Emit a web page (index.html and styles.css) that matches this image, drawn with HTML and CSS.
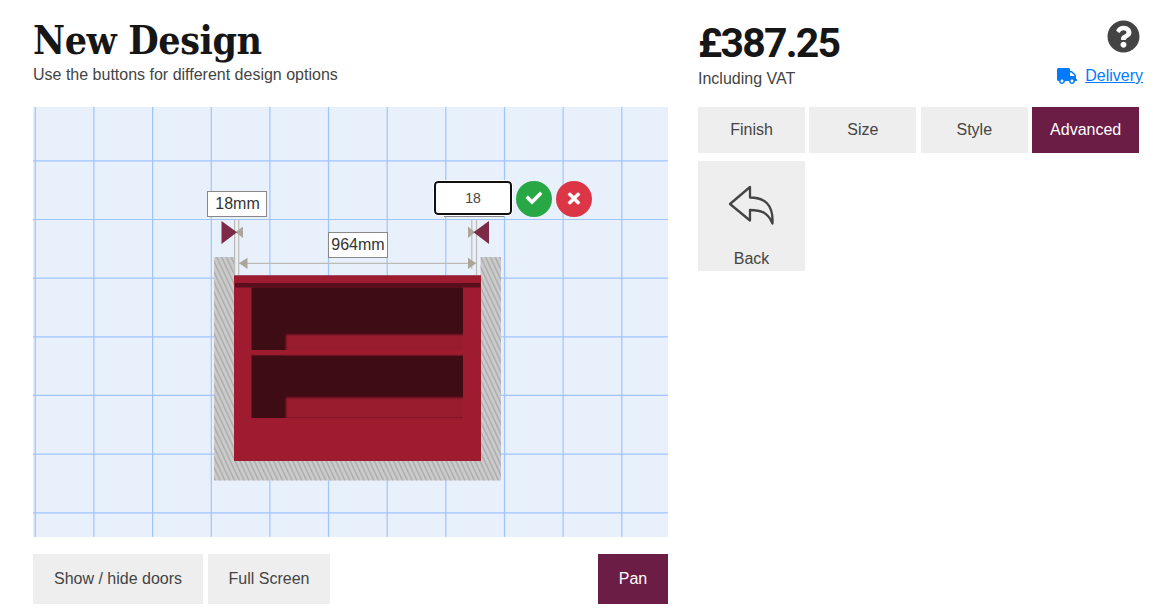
FILE: index.html
```html
<!DOCTYPE html>
<html lang="en">
<head>
    <meta charset="UTF-8">
    <meta name="viewport" content="width=device-width, initial-scale=1.0">
    <title>New Design</title>
    <link rel="stylesheet" href="styles.css">
</head>
<body>
    <div class="page">
        <main class="design">
            <header class="design-header">
                <h1>New Design</h1>
                <p>Use the buttons for different design options</p>
            </header>

            <div class="canvas">
                <svg class="drawing" width="635" height="430" viewBox="33 107 635 430">
                    <defs>
                        <pattern id="hatch" width="4.8" height="8" patternUnits="userSpaceOnUse" patternTransform="skewX(25)">
                            <rect width="4.8" height="8" fill="#cbcbcb"/>
                            <rect width="1.7" height="8" fill="#adadad"/>
                        </pattern>
                        <filter id="soft" x="-10%" y="-30%" width="120%" height="160%"><feGaussianBlur stdDeviation="1.3"/></filter>
                        <clipPath id="inside"><path d="M251.5 287.5H463V350H251.5zM251.5 355H463V418H251.5z"/></clipPath>
                    </defs>
                    <rect x="33" y="107" width="635" height="430" fill="#e8f0fc"/>

                    <!-- grid -->
                    <path d="M35.3 107V537M93.9 107V537M152.6 107V537M211.3 107V537M269.9 107V537M328.5 107V537M387.2 107V537M445.8 107V537M504.5 107V537M563.1 107V537M621.8 107V537M33 160.8H668M33 219.5H668M33 278.2H668M33 336.8H668M33 395.4H668M33 454.2H668M33 512.8H668" stroke="#a0c4ff" stroke-width="1.2"/>

                    <!-- walls and floor -->
                    <path d="M214 257H234.5V461H480.5V257H501V480.5H214z" fill="url(#hatch)"/>

                    <!-- cabinet -->
                    <rect x="234" y="275.5" width="247" height="185.5" fill="#9e1b30"/>
                    <path d="M234 275.8H481" stroke="#8c2436" stroke-width=".8"/>
                    <rect x="235" y="283" width="245.5" height="4.5" fill="#5a101c"/>
                    <g clip-path="url(#inside)">
                        <rect x="251" y="287" width="213" height="132" fill="#3e0c13"/>
                        <path d="M286 334.5H475V355H286zM286 397.5H475V430H286z" fill="#991b2f" filter="url(#soft)"/>
                    </g>
                    <path d="M251.5 355.3H463M286 417.6H463" stroke="#7a1524" stroke-width=".8"/>

                    <!-- dimension lines -->
                    <g stroke="#bdbbb4" stroke-width="1.2">
                        <path d="M234.6 220V275M238.7 220V275M471.8 220V269M476.5 220V275M239 263.3H476"/>
                        <path d="M444 216.5H504" stroke="#888"/>
                    </g>
                    <path d="M243 226.5V238L235.5 232.3zM247.5 257.8V269L239 263.3zM468 226.5V238L475 232.3zM468 257.8V269L476 263.3z" fill="#aba798"/>
                    <path d="M221.5 221V244L237 232.3zM489 221V244L473.5 232.3z" fill="#7c2a46"/>

                    <!-- dimension labels -->
                    <g class="label">
                        <rect x="207.5" y="191.5" width="59" height="25"/>
                        <text x="237.5" y="209">18mm</text>
                        <rect x="328.5" y="232.5" width="59" height="25"/>
                        <text x="358" y="250">964mm</text>
                    </g>
                </svg>

                <div class="editor">
                    <input type="text" value="18">
                    <button class="round ok" aria-label="OK">
                        <svg width="16" height="16" viewBox="0 0 512 512"><path fill="#fff" stroke="#fff" stroke-width="18" d="M173.898 439.404l-166.4-166.4c-9.997-9.997-9.997-26.206 0-36.204l36.203-36.204c9.997-9.998 26.207-9.998 36.204 0L192 312.69 432.095 72.596c9.997-9.997 26.207-9.997 36.204 0l36.203 36.204c9.997 9.997 9.997 26.206 0 36.204l-294.4 294.401c-9.998 9.997-26.207 9.997-36.204-.001z"/></svg>
                    </button>
                    <button class="round cancel" aria-label="Cancel">
                        <svg width="12" height="17" viewBox="0 0 352 512"><path fill="#fff" stroke="#fff" stroke-width="14" d="M242.72 256l100.07-100.07c12.28-12.28 12.28-32.19 0-44.48l-22.24-22.24c-12.28-12.28-32.19-12.28-44.48 0L176 189.28 75.93 89.21c-12.28-12.28-32.19-12.28-44.48 0L9.21 111.45c-12.28 12.28-12.28 32.19 0 44.48L109.28 256 9.21 356.07c-12.28 12.28-12.28 32.19 0 44.48l22.24 22.24c12.28 12.28 32.2 12.28 44.48 0L176 322.72l100.07 100.07c12.28 12.28 32.2 12.28 44.48 0l22.24-22.24c12.28-12.28 12.28-32.19 0-44.48L242.72 256z"/></svg>
                    </button>
                </div>
            </div>

            <div class="toolbar">
                <button class="btn doors">Show / hide doors</button>
                <button class="btn full">Full Screen</button>
                <button class="btn active pan">Pan</button>
            </div>
        </main>

        <aside class="options">
            <header class="price-header">
                <div>
                    <h2>£387.25</h2>
                    <p>Including VAT</p>
                </div>
                <div class="links">
                    <svg class="help" width="33" height="33" viewBox="0 0 512 512"><path fill="#444" d="M504 256c0 136.997-111.043 248-248 248S8 392.997 8 256C8 119.083 119.043 8 256 8s248 111.083 248 248zM262.655 90c-54.497 0-89.255 22.957-116.549 63.758-3.536 5.286-2.353 12.415 2.715 16.258l34.699 26.31c5.205 3.947 12.621 3.008 16.665-2.122 17.864-22.658 30.113-35.797 57.303-35.797 20.429 0 45.698 13.148 45.698 32.958 0 14.976-12.363 22.667-32.534 33.976C247.128 238.528 216 254.941 216 296v4c0 6.627 5.373 12 12 12h56c6.627 0 12-5.373 12-12v-1.333c0-28.462 83.186-29.647 83.186-106.667 0-58.002-60.165-102-116.531-102zM256 338c-25.365 0-46 20.635-46 46 0 25.364 20.635 46 46 46s46-20.636 46-46c0-25.365-20.635-46-46-46z"/></svg>
                    <div class="delivery">
                        <svg width="20" height="16" viewBox="0 0 640 512"><path fill="#007bff" d="M624 352h-16V243.9c0-12.7-5.1-24.9-14.1-33.9L494 110.1c-9-9-21.2-14.1-33.9-14.1H416V48c0-26.5-21.5-48-48-48H48C21.5 0 0 21.5 0 48v320c0 26.5 21.5 48 48 48h16c0 53 43 96 96 96s96-43 96-96h128c0 53 43 96 96 96s96-43 96-96h48c8.8 0 16-7.2 16-16v-32c0-8.8-7.2-16-16-16zM160 464c-26.5 0-48-21.5-48-48s21.5-48 48-48 48 21.5 48 48-21.5 48-48 48zm320 0c-26.5 0-48-21.5-48-48s21.5-48 48-48 48 21.5 48 48-21.5 48-48 48zm80-208H416V144h44.1l99.9 99.9V256z"/></svg>
                        <a href="#">Delivery</a>
                    </div>
                </div>
            </header>

            <div class="tabs">
                <button class="btn">Finish</button>
                <button class="btn">Size</button>
                <button class="btn">Style</button>
                <button class="btn active">Advanced</button>
                <button class="btn tile">
                    <svg width="48" height="42" viewBox="0 0 48 42"><path d="M2 20L22 3V13.5C37 13.5 45.5 21 44.5 39.5C40 29 34 26 22 26V36.5Z" fill="none" stroke="#444" stroke-width="2.3" stroke-linejoin="round"/></svg>
                    <span>Back</span>
                </button>
            </div>
        </aside>
    </div>
</body>
</html>
```
FILE: styles.css
```css
* {
    box-sizing: border-box;
}

body {
    margin: 0;
    background-color: #fff;
    color: #444;
    font-family: "Liberation Sans", Arial, sans-serif;
    font-size: 16px;
    line-height: 24px;
}

h1, h2, p {
    margin: 0;
}

h1, h2 {
    color: #161616;
    font-weight: bold;
    line-height: 48px;
    white-space: nowrap;
}

h1 {
    font-family: "Roboto Slab", "DejaVu Serif Condensed", "DejaVu Serif", serif;
    font-size: 39px;
    font-stretch: condensed;
    letter-spacing: -0.4px;
}

h2 {
    font-family: "Roboto Slab", Roboto, sans-serif;
    font-size: 41px;
    letter-spacing: -1.8px;
}

svg {
    display: block;
}

.page {
    display: flex;
    gap: 30px;
    padding-left: 33px;
}

.design {
    width: 635px;
}

.design-header {
    height: 107px;
    padding-top: 16px;
}

.design-header p {
    margin-top: -1px;
}

.canvas {
    position: relative;
    height: 430px;
}

.label rect {
    fill: #fff;
    stroke: #888;
}

.label text {
    fill: #333;
    font-size: 16px;
    text-anchor: middle;
}

.editor {
    position: absolute;
    top: 74px;
    left: 401px;
    display: flex;
    gap: 4px;
}

.editor input {
    width: 78px;
    height: 34px;
    padding: 0;
    border: 2px solid #101010;
    border-radius: 4px;
    outline: 1px solid #fff;
    background-color: #fff;
    color: #444;
    font-family: inherit;
    font-size: 14px;
    text-align: center;
}

.round {
    display: flex;
    justify-content: center;
    align-items: center;
    width: 36px;
    height: 36px;
    padding: 0 0 2px;
    border: 0;
    border-radius: 50%;
}

.round svg {
    overflow: visible;
}

.ok {
    background-color: #28a745;
}

.cancel {
    background-color: #dc3545;
}

.btn {
    height: 46px;
    padding: 0;
    border: 0;
    background-color: #eee;
    color: #444;
    font-family: inherit;
    font-size: 16px;
    line-height: 24px;
}

.btn.active {
    background-color: #6b1d45;
    color: #fff;
}

.toolbar {
    display: flex;
    gap: 5px;
    margin-top: 17px;
}

.toolbar .btn {
    height: 50px;
}

.doors {
    width: 170px;
}

.full {
    width: 122px;
}

.pan {
    width: 70px;
    margin-left: auto;
}

.options {
    width: 445px;
}

.price-header {
    display: flex;
    justify-content: space-between;
    height: 107px;
    padding-top: 19px;
}

.links {
    display: flex;
    flex-direction: column;
    align-items: flex-end;
    gap: 11px;
    padding-top: 1px;
}

.help {
    margin-right: 3px;
}

.delivery {
    display: flex;
    align-items: center;
    gap: 8px;
}

.delivery svg {
    margin-top: -1px;
}

.delivery a {
    color: #007bff;
    text-decoration: underline;
}

.tabs {
    display: grid;
    grid-template-columns: repeat(4, 107px);
    gap: 8px 4.4px;
}

.tile {
    display: flex;
    flex-direction: column;
    align-items: center;
    justify-content: space-between;
    height: 110px;
    padding-top: 23px;
}
```
